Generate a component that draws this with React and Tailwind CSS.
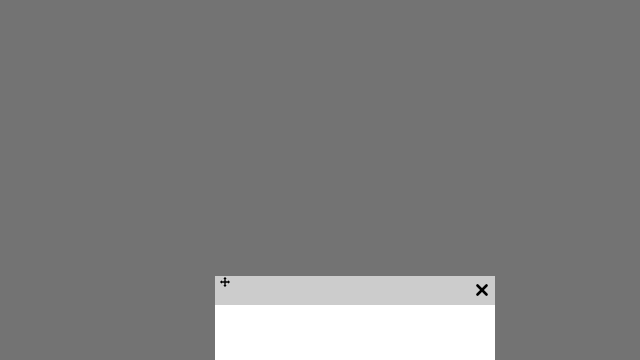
import { X } from "lucide-react";

function MoveIcon() {
  return (
    <svg width="10" height="10" viewBox="0 0 10 10" className="text-black">
      <path d="M5 0.8v8.4M0.8 5h8.4" stroke="currentColor" strokeWidth="1.4" />
      <path d="M5 0L3.3 2h3.4zM5 10L3.3 8h3.4zM0 5L2 3.3v3.4zM10 5L8 3.3v3.4z" fill="currentColor" />
    </svg>
  );
}

export default function App() {
  return (
    <div className="relative h-[360px] w-[640px] overflow-hidden bg-[#737373] font-['Liberation_Sans',sans-serif]">
      <div className="absolute left-[215px] top-[276px] w-[280px]">
        <div className="flex h-[29px] items-start justify-between bg-[#cccccc] pl-[5px] pr-[4px]">
          <div className="mt-[1px] cursor-move">
            <MoveIcon />
          </div>
          <button className="mt-[5px] text-black">
            <X size={18} strokeWidth={3.5} />
          </button>
        </div>
        <div className="h-[200px] bg-white" />
      </div>
    </div>
  );
}
